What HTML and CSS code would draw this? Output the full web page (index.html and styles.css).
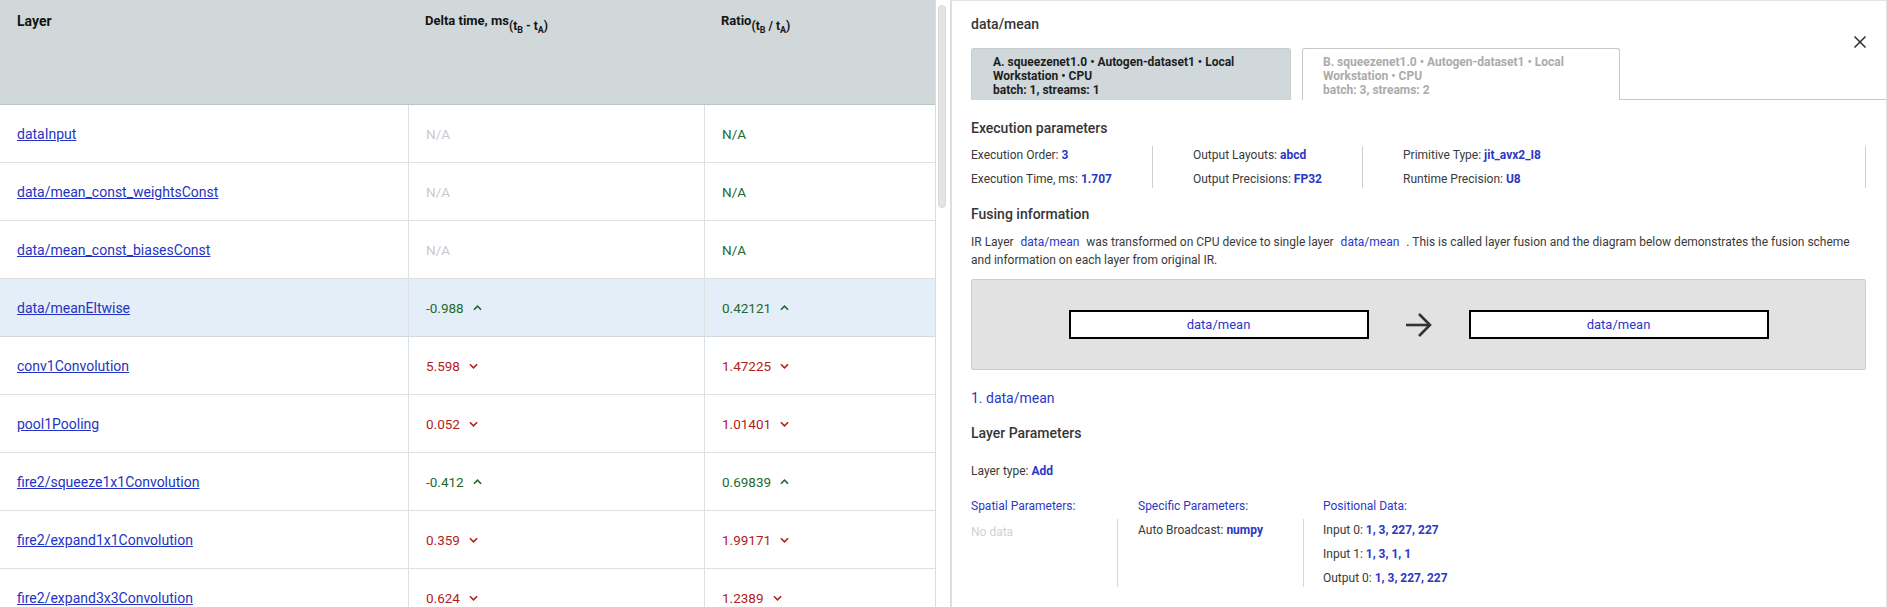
FILE: index.html
```html
<!DOCTYPE html>
<html>
<head>
<meta charset="utf-8">
<link rel="stylesheet" href="styles.css">
</head>
<body>
<div class="app">
  <div class="left">
    <div class="table-wrap">
      <div class="thead">
        <div class="th c1">Layer</div>
        <div class="th c2">Delta time, ms<span class="sub">(t<span class="subsub">B</span> - t<span class="subsub">A</span>)</span></div>
        <div class="th c3">Ratio<span class="sub">(t<span class="subsub">B</span> / t<span class="subsub">A</span>)</span></div>
      </div>
      <div class="tr">
        <div class="td c1"><a href="#">dataInput</a></div>
        <div class="td c2 na">N/A</div>
        <div class="td c3 good">N/A</div>
      </div>
      <div class="tr">
        <div class="td c1"><a href="#">data/mean_const_weightsConst</a></div>
        <div class="td c2 na">N/A</div>
        <div class="td c3 good">N/A</div>
      </div>
      <div class="tr">
        <div class="td c1"><a href="#">data/mean_const_biasesConst</a></div>
        <div class="td c2 na">N/A</div>
        <div class="td c3 good">N/A</div>
      </div>
      <div class="tr selected">
        <div class="td c1"><a href="#">data/meanEltwise</a></div>
        <div class="td c2 good">-0.988<svg class="chev" viewBox="0 0 10 6"><polyline points="1,5 5,1 9,5"/></svg></div>
        <div class="td c3 good">0.42121<svg class="chev" viewBox="0 0 10 6"><polyline points="1,5 5,1 9,5"/></svg></div>
      </div>
      <div class="tr">
        <div class="td c1"><a href="#">conv1Convolution</a></div>
        <div class="td c2 bad">5.598<svg class="chev" viewBox="0 0 10 6"><polyline points="1,1 5,5 9,1"/></svg></div>
        <div class="td c3 bad">1.47225<svg class="chev" viewBox="0 0 10 6"><polyline points="1,1 5,5 9,1"/></svg></div>
      </div>
      <div class="tr">
        <div class="td c1"><a href="#">pool1Pooling</a></div>
        <div class="td c2 bad">0.052<svg class="chev" viewBox="0 0 10 6"><polyline points="1,1 5,5 9,1"/></svg></div>
        <div class="td c3 bad">1.01401<svg class="chev" viewBox="0 0 10 6"><polyline points="1,1 5,5 9,1"/></svg></div>
      </div>
      <div class="tr">
        <div class="td c1"><a href="#">fire2/squeeze1x1Convolution</a></div>
        <div class="td c2 good">-0.412<svg class="chev" viewBox="0 0 10 6"><polyline points="1,5 5,1 9,5"/></svg></div>
        <div class="td c3 good">0.69839<svg class="chev" viewBox="0 0 10 6"><polyline points="1,5 5,1 9,5"/></svg></div>
      </div>
      <div class="tr">
        <div class="td c1"><a href="#">fire2/expand1x1Convolution</a></div>
        <div class="td c2 bad">0.359<svg class="chev" viewBox="0 0 10 6"><polyline points="1,1 5,5 9,1"/></svg></div>
        <div class="td c3 bad">1.99171<svg class="chev" viewBox="0 0 10 6"><polyline points="1,1 5,5 9,1"/></svg></div>
      </div>
      <div class="tr">
        <div class="td c1"><a href="#">fire2/expand3x3Convolution</a></div>
        <div class="td c2 bad">0.624<svg class="chev" viewBox="0 0 10 6"><polyline points="1,1 5,5 9,1"/></svg></div>
        <div class="td c3 bad">1.2389<svg class="chev" viewBox="0 0 10 6"><polyline points="1,1 5,5 9,1"/></svg></div>
      </div>
    </div>
    <div class="scrollbar"><div class="thumb"></div></div>
  </div>

  <aside class="panel">
    <button class="close" aria-label="Close"><svg viewBox="0 0 14 14"><line x1="1.5" y1="1.5" x2="12.5" y2="12.5"/><line x1="12.5" y1="1.5" x2="1.5" y2="12.5"/></svg></button>
    <div class="panel-title">data/mean</div>

    <div class="tabs">
      <div class="tab tab-a">
        <div>A. squeezenet1.0 • Autogen-dataset1 • Local Workstation • CPU</div>
        <div>batch: 1, streams: 1</div>
      </div>
      <div class="tab tab-b">
        <div>B. squeezenet1.0 • Autogen-dataset1 • Local Workstation • CPU</div>
        <div>batch: 3, streams: 2</div>
      </div>
      <div class="tab-fill"></div>
    </div>

    <div class="section-title exec-title">Execution parameters</div>
    <div class="params">
      <div class="pcol p1">
        <div>Execution Order: <b>3</b></div>
        <div>Execution Time, ms: <b>1.707</b></div>
      </div>
      <div class="pcol p2">
        <div>Output Layouts: <b>abcd</b></div>
        <div>Output Precisions: <b>FP32</b></div>
      </div>
      <div class="pcol p3">
        <div>Primitive Type: <b>jit_avx2_I8</b></div>
        <div>Runtime Precision: <b>U8</b></div>
      </div>
    </div>

    <div class="section-title fuse-title">Fusing information</div>
    <p class="fuse-text">IR Layer<span class="hl">data/mean</span>was transformed on CPU device to single layer<span class="hl">data/mean</span>. This is called layer fusion and the diagram below demonstrates the fusion scheme and information on each layer from original IR.</p>

    <div class="diagram">
      <div class="node">data/mean</div>
      <svg class="arrow" viewBox="0 0 28 26"><line x1="1" y1="13" x2="25" y2="13"/><polyline points="14,2 25,13 14,24"/></svg>
      <div class="node">data/mean</div>
    </div>

    <div class="layer-name">1. data/mean</div>
    <div class="section-title lp-title">Layer Parameters</div>
    <div class="layer-type">Layer type: <b>Add</b></div>

    <div class="lparams">
      <div class="lcol l1">
        <div class="lhead">Spatial Parameters:</div>
        <div class="lbody"><div class="nodata">No data</div></div>
      </div>
      <div class="lcol l2">
        <div class="lhead">Specific Parameters:</div>
        <div class="lbody"><div>Auto Broadcast: <b>numpy</b></div></div>
      </div>
      <div class="lcol l3">
        <div class="lhead">Positional Data:</div>
        <div class="lbody">
          <div>Input 0: <b>1, 3, 227, 227</b></div>
          <div>Input 1: <b>1, 3, 1, 1</b></div>
          <div>Output 0: <b>1, 3, 227, 227</b></div>
        </div>
      </div>
    </div>
  </aside>
</div>
</body>
</html>
```

FILE: styles.css
```css
* { box-sizing: border-box; }

html, body {
  margin: 0;
  padding: 0;
  background: #fff;
}

body {
  font-family: Roboto, "Liberation Sans", Arial, sans-serif;
  color: #333;
  width: 1887px;
  height: 607px;
  overflow: hidden;
}

.app {
  display: flex;
  height: 607px;
  overflow: hidden;
}

/* ---------- left table ---------- */
.left {
  display: flex;
  flex: none;
  width: 950px;
  height: 607px;
}

.table-wrap {
  width: 936px;
  flex: none;
  border-right: 1px solid #dcdcdc;
  overflow: hidden;
  font-size: 14px;
}

.thead {
  display: flex;
  height: 105px;
  background: #d0d8da;
  border-bottom: 1px solid #bdc4c7;
  font-size: 13px;
}

.th {
  padding: 13px 17px 0;
  font-weight: 700;
  color: #141414;
  line-height: 16px;
}

.th.c1 { font-size: 14px; }

.c1 { width: 408px; flex: none; }
.c2 { width: 296px; flex: none; }
.c3 { width: 231px; flex: none; }

.sub {
  font-size: 12px;
  position: relative;
  top: 5px;
}

.subsub {
  font-size: 9px;
  position: relative;
  top: 3px;
}

.tr {
  display: flex;
  height: 58px;
  border-bottom: 1px solid #dde1e4;
}

.tr.selected {
  background: #e4eef8;
  border-bottom-color: #d3dbe2;
}

.td {
  display: flex;
  align-items: center;
  padding: 0 17px;
  line-height: 16px;
}

.td.c2, .td.c3 {
  border-left: 1px solid #dde1e4;
  font-size: 13.5px;
}

.td a {
  color: #2533c2;
  text-decoration: underline;
}

.na { color: #c8cbce; }
.good { color: #23692e; }
.bad { color: #b3201c; }

.chev {
  width: 9px;
  height: 6px;
  margin-left: 9px;
  fill: none;
  stroke: currentColor;
  stroke-width: 1.8;
}

.scrollbar {
  width: 14px;
  flex: none;
  padding: 5px 0 0 2px;
}

.thumb {
  width: 8px;
  height: 203px;
  background: #e3e3e3;
  border: 1px solid #d8d8d8;
  border-radius: 4px;
}

/* ---------- right panel ---------- */
.panel {
  position: relative;
  width: 937px;
  flex: none;
  height: 607px;
  border-left: 2px solid #dedede;
  border-top: 1px solid #e2e2e2;
  border-right: 1px solid #e2e2e2;
  padding: 13px 20px 0 19px;
  font-size: 12px;
  line-height: 18px;
  overflow: hidden;
}

.close {
  position: absolute;
  top: 34px;
  right: 19px;
  width: 14px;
  height: 14px;
  padding: 0;
  border: 0;
  background: transparent;
}

.close svg {
  display: block;
  width: 14px;
  height: 14px;
  stroke: #333;
  stroke-width: 1.6;
}

.panel-title {
  font-size: 14px;
  font-weight: 500;
  line-height: 20px;
  color: #363636;
}

.tabs {
  display: flex;
  margin-top: 14px;
  margin-right: -20px;
  height: 52px;
}

.tab {
  width: 320px;
  height: 52px;
  padding: 6px 40px 0 21px;
  font-weight: 700;
  font-size: 12px;
  line-height: 14px;
  border-radius: 3px 3px 0 0;
}

.tab-a {
  background: #d0d8db;
  color: #1e1e1e;
  border: 1px solid #c7ced1;
  border-bottom: 0;
}

.tab-b {
  width: 318px;
  margin-left: 11px;
  padding-left: 20px;
  background: #fff;
  color: #ababab;
  border: 1px solid #c8c8c8;
  border-bottom: 0;
}

.tab-fill {
  flex: 1;
  border-bottom: 1px solid #c8c8c8;
}

.section-title {
  font-size: 14px;
  font-weight: 500;
  line-height: 20px;
  color: #363636;
}

.exec-title { margin-top: 18px; }

.params {
  display: flex;
  margin-top: 8px;
}

.pcol {
  display: flex;
  flex-direction: column;
  gap: 6px;
  border-right: 1px solid #cfcfcf;
  color: #3a3a3a;
}

.p1 { width: 182px; }
.p2 { width: 210px; padding-left: 40px; }
.p3 { flex: 1; padding-left: 40px; }

.panel b {
  color: #2b38c6;
  font-weight: 700;
}

.fuse-title { margin-top: 16px; }

.fuse-text {
  margin: 9px 0 0;
  padding-right: 14px;
  color: #3a3a3a;
}

.hl {
  color: #2b38c6;
  margin: 0 7px;
}

.diagram {
  margin-top: 10px;
  height: 91px;
  background: #e2e2e2;
  border: 1px solid #cdcdcd;
  border-radius: 2px;
  display: flex;
  align-items: center;
  justify-content: center;
  gap: 36px;
}

.node {
  width: 300px;
  height: 29px;
  border: 2px solid #000;
  background: #fff;
  color: #2b38c6;
  font-size: 13px;
  display: flex;
  align-items: center;
  justify-content: center;
}

.arrow {
  width: 28px;
  height: 26px;
  fill: none;
  stroke: #333;
  stroke-width: 2.6;
}

.layer-name {
  margin-top: 18px;
  font-size: 14px;
  line-height: 20px;
  color: #2b38c6;
}

.lp-title { margin-top: 15px; }

.layer-type {
  margin-top: 19px;
  color: #3a3a3a;
}

.lparams {
  display: flex;
  margin-top: 17px;
}

.lcol {
  display: flex;
  flex-direction: column;
}

.lhead {
  color: #2b38c6;
}

.lbody {
  flex: 1;
  margin-top: 4px;
  padding-top: 2px;
  display: flex;
  flex-direction: column;
  gap: 6px;
  color: #3a3a3a;
}

.l1 { width: 147px; }
.l1 .lbody, .l2 .lbody { border-right: 1px solid #d8d8d8; }
.l2 { width: 186px; padding-left: 20px; }
.l3 { padding-left: 19px; }
.l2 .lbody { margin-left: -20px; padding-left: 20px; }
.l3 .lbody { margin-left: -19px; padding-left: 19px; }

.nodata {
  color: #cfd2d4;
  margin-top: 2px;
}
```
